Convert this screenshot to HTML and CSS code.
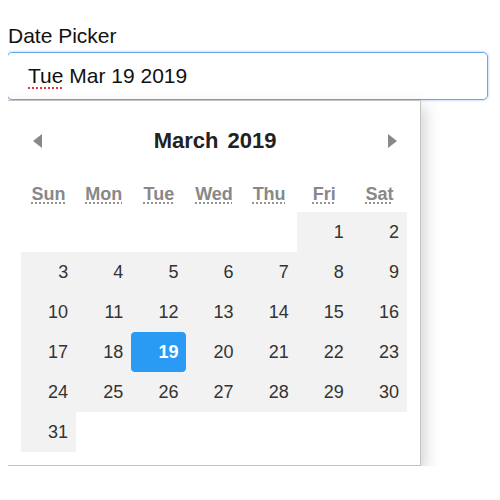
FILE: index.html
```html
<!DOCTYPE html>
<html lang="en">
<head>
  <meta charset="UTF-8" />
  <title>Date Picker</title>
  <link rel="stylesheet" href="styles.css">
</head>
<body>
  <div class="field">
    <div class="field-label">Date Picker</div>
    <div class="date-input"><span class="typo">Tue</span> Mar 19 2019</div>

    <div class="calendar">
      <div class="cal-head">
        <span class="nav prev"></span>
        <div class="title"><span>March</span><span>2019</span></div>
        <span class="nav next"></span>
      </div>

      <div class="weekdays">
        <abbr title="Sunday">Sun</abbr>
        <abbr title="Monday">Mon</abbr>
        <abbr title="Tuesday">Tue</abbr>
        <abbr title="Wednesday">Wed</abbr>
        <abbr title="Thursday">Thu</abbr>
        <abbr title="Friday">Fri</abbr>
        <abbr title="Saturday">Sat</abbr>
      </div>

      <div class="days">
        <div></div><div></div><div></div><div></div><div></div>
        <div class="day">1</div><div class="day">2</div>
        <div class="day">3</div><div class="day">4</div><div class="day">5</div><div class="day">6</div>
        <div class="day">7</div><div class="day">8</div><div class="day">9</div>
        <div class="day">10</div><div class="day">11</div><div class="day">12</div><div class="day">13</div>
        <div class="day">14</div><div class="day">15</div><div class="day">16</div>
        <div class="day">17</div><div class="day">18</div><div class="day selected">19</div><div class="day">20</div>
        <div class="day">21</div><div class="day">22</div><div class="day">23</div>
        <div class="day">24</div><div class="day">25</div><div class="day">26</div><div class="day">27</div>
        <div class="day">28</div><div class="day">29</div><div class="day">30</div>
        <div class="day">31</div>
      </div>
    </div>
  </div>
</body>
</html>
```

FILE: styles.css
```css
body {
  margin: 8px;
  font-family: "Liberation Sans", Arial, Helvetica, sans-serif;
  color: #222;
  background: #fff;
}

.field {
  padding-top: 16px;
}

.field-label {
  font-size: 21px;
  line-height: 24px;
  margin-bottom: 4px;
  color: #111;
}

.date-input {
  box-sizing: border-box;
  height: 48px;
  width: 481px;
  margin-left: -1px;
  padding: 0 20px;
  border: 1px solid #6aa6e6;
  border-radius: 5px;
  box-shadow: 0 0 3px rgba(102, 166, 230, 0.7);
  font-size: 21px;
  line-height: 46px;
  color: #111;
}

.typo {
  text-decoration: underline dotted #e8343c;
  text-decoration-thickness: 2px;
  text-underline-offset: 4px;
}

.calendar {
  width: 386px;
  margin-left: -1px;
  padding: 13px;
  background: #fff;
  border: 1px solid #c4c4c4;
  box-shadow: 4px 6px 14px rgba(0, 0, 0, 0.18);
}

.cal-head {
  display: flex;
  align-items: center;
  justify-content: space-between;
  height: 54px;
}

.nav {
  width: 0;
  height: 0;
  border-top: 7px solid transparent;
  border-bottom: 7px solid transparent;
}

.prev {
  margin-left: 12px;
  border-right: 9px solid #888;
}

.next {
  margin-right: 10px;
  border-left: 9px solid #888;
}

.title {
  display: flex;
  gap: 9px;
  font-size: 22px;
  font-weight: bold;
  color: #222;
}

.weekdays {
  display: grid;
  grid-template-columns: repeat(7, 1fr);
  padding-top: 8px;
  height: 36px;
}

.weekdays abbr {
  text-align: center;
  font-size: 18px;
  font-weight: bold;
  line-height: 36px;
  color: #888;
  text-decoration: underline dotted #888;
  text-underline-offset: 3px;
}

.days {
  display: grid;
  grid-template-columns: repeat(7, 1fr);
  grid-auto-rows: 40px;
}

.day {
  background: #f2f2f2;
  text-align: right;
  padding-right: 8px;
  font-size: 18px;
  line-height: 40px;
  color: #333;
}

.day.selected {
  background: #299bf4;
  border-radius: 4px;
  color: #fff;
  font-weight: bold;
}
```
